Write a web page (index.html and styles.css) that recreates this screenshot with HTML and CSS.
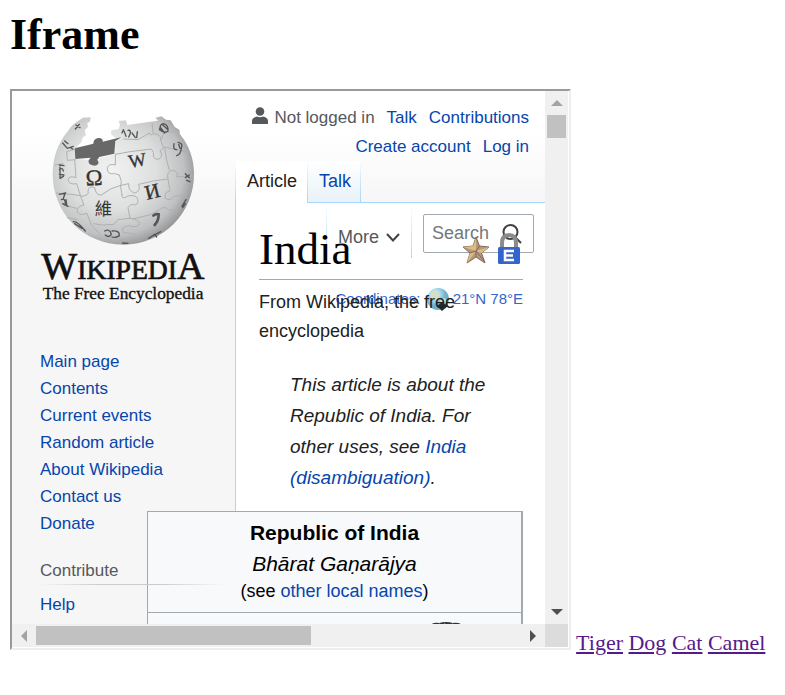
FILE: index.html
```html
<!DOCTYPE html>
<html lang="en">
<head>
<meta charset="utf-8">
<title>Iframe</title>
<link rel="stylesheet" href="styles.css">
</head>
<body>
<h1 class="heading">Iframe</h1>
<div class="frame">
  <div class="frame-grid">
    <div class="viewport">
      <aside class="sidebar">
        <svg class="logo" viewBox="0 0 510 600" role="img" aria-label="Wikipedia, The Free Encyclopedia">
          <defs>
            <radialGradient id="ball" cx="0.42" cy="0.42" r="0.62">
              <stop offset="0" stop-color="#f2f2f2"/>
              <stop offset="0.5" stop-color="#dedfdf"/>
              <stop offset="0.82" stop-color="#bfc0c1"/>
              <stop offset="1" stop-color="#8e8f91"/>
            </radialGradient>
          </defs>
          <path fill="url(#ball)" d="M128 38L152 37L150 50L142 54L144 66L134 76L138 90L128 98L124 112L108 128L106 162L150 165Q158 180 172 176L178 160L226 148V110L243 100L226 98L213 88L214 76L236 72L240 60L236 48L258 46L262 60L330 50L354 47L346 38L364 34L378 44L392 46L404 66L418 74L420 88Q462 140 462 208C462 326 368 419 250 419S38 326 38 208Q38 132 84 78Q98 56 118 46Z"/>
          <path fill="#686868" d="M104 130L160 116Q160 102 174 99Q190 98 188 110L243 97Q236 104 226 108L223 146L178 156L172 164Q182 178 164 182Q142 180 146 166L152 158L106 162Z"/>
          <g fill="none" stroke="#b0b0b0" stroke-width="3">
            <path d="M226 146V180Q208 174 202 188Q200 210 224 206L238 210Q248 230 242 246L246 270"/>
            <path d="M104 162L108 218Q86 210 84 226Q88 240 110 236L122 274Q150 272 144 258Q146 240 164 248Q168 272 184 270L212 252Q240 240 266 236Q264 258 284 264Q304 258 296 238L340 228L384 222Q378 198 400 196Q418 202 410 216L460 212"/>
            <path d="M226 148L270 140L334 132Q344 142 340 154Q346 168 360 160Q370 150 360 138L374 126L428 138L448 146"/>
            <path d="M336 54L340 86Q366 88 362 106L370 126"/>
            <path d="M340 86Q330 94 328 84L294 104L250 102"/>
            <path d="M388 196L380 166L374 128"/>
            <path d="M122 274L132 300Q108 304 112 322Q124 334 140 324L154 360L184 392"/>
            <path d="M246 268Q244 280 254 278Q274 266 290 276Q300 294 286 300Q272 294 264 308L270 340Q294 342 300 356Q290 370 266 362Q240 366 250 382L282 386L300 408"/>
            <path d="M270 340L234 344L222 358L188 360L160 356"/>
            <path d="M384 222L390 258Q370 262 376 280Q392 290 402 274L440 270"/>
            <path d="M276 342L328 330L356 316Q372 300 386 314L412 318"/>
            <path d="M44 180L70 176M48 264L92 268L122 272M70 300L110 310M80 338L112 344"/>
            <path d="M402 80L372 82L364 104M106 164L82 166L80 140L106 132"/>
          </g>
          <g fill="#333" stroke="#333" font-family="Liberation Serif, serif" text-anchor="middle">
            <text x="163" y="241" font-size="68" transform="rotate(-3 163 240)">Ω</text>
            <text x="295" y="184" font-size="56" transform="rotate(-10 297 183)">W</text>
            <text x="342" y="279" font-size="62" transform="rotate(-14 344 278)">И</text>
            <text x="190" y="331" font-size="52" stroke="none" font-family="Noto Sans CJK TC, sans-serif">維</text>
          </g>
          <g fill="none" stroke="#555" stroke-width="4" stroke-linecap="round">
            <path stroke-width="8" d="M340 332Q346 326 356 328Q356 348 344 360"/>
            <path d="M252 78L258 94M264 76Q274 74 270 88L266 96M276 84L286 98M292 80L290 98M250 74L246 84"/>
            <path d="M360 66L374 84M366 58L384 74M358 72Q372 88 384 78Q386 60 370 56Q358 58 360 76"/>
            <path d="M402 116Q398 134 410 134M414 112Q430 114 424 130Q422 148 410 152M416 118L420 130"/>
            <path d="M68 114L82 130L100 124M74 108L84 116M92 128L98 132M108 60L120 68M106 72L118 58"/>
            <path d="M58 180L72 182M58 194Q68 186 70 198M58 208L72 210M60 220L70 214M60 186V218"/>
            <path d="M58 268L76 264L70 280M64 284Q76 278 76 296M68 296L84 304M78 284L80 300"/>
            <path d="M100 350Q112 348 136 378M104 356L126 370"/>
            <path d="M194 378Q210 370 214 388Q206 400 196 390M216 378Q240 376 238 392Q226 400 216 396"/>
            <path d="M326 400L344 388L350 396M340 392L362 380M438 284L426 304M436 296L428 308M436 206L448 218M436 218L448 210M440 226L450 230M248 414L264 415"/>
          </g>
          <g fill="#111" stroke="#111" font-family="Liberation Serif, serif">
            <text x="4" y="523" font-size="114" stroke-width="2">W<tspan font-size="83">IKIPEDI</tspan>A</text>
            <text x="8" y="583" font-size="52">The Free Encyclopedia</text>
          </g>
        </svg>
        <nav class="side-links" aria-label="Navigation">
          <a href="#">Main page</a>
          <a href="#">Contents</a>
          <a href="#">Current events</a>
          <a href="#">Random article</a>
          <a href="#">About Wikipedia</a>
          <a href="#">Contact us</a>
          <a href="#">Donate</a>
        </nav>
        <h3 class="side-title">Contribute</h3>
        <nav class="side-links" aria-label="Contribute">
          <a href="#">Help</a>
        </nav>
      </aside>
      <main class="main">
        <header class="header">
          <div class="personal">
            <svg class="person" viewBox="0 0 16 18" aria-hidden="true"><circle cx="8" cy="4.5" r="4.3"/><path d="M0 17V14C0 11 3 10 5 9.5Q8 11 11 9.5C13 10 16 11 16 14V17Z"/></svg>
            <span>Not logged in</span>
            <a href="#">Talk</a>
            <a href="#">Contributions</a>
          </div>
          <div class="personal">
            <a href="#">Create account</a>
            <a href="#">Log in</a>
          </div>
          <nav class="tabs" aria-label="Namespaces">
            <a class="tab current" href="#">Article</a>
            <a class="tab" href="#">Talk</a>
          </nav>
        </header>
        <div class="tools">
          <button class="more" type="button">More
            <svg viewBox="0 0 14 9" aria-hidden="true"><path d="M1 1L7 7.5L13 1"/></svg>
          </button>
          <div class="search">
            <input type="text" placeholder="Search" aria-label="Search">
            <svg viewBox="0 0 20 20" aria-hidden="true"><circle cx="8.5" cy="8" r="7"/><path d="M13 13L19 19"/></svg>
          </div>
        </div>
        <div class="badges">
          <svg class="star" viewBox="0 0 28 28" role="img" aria-label="Featured article"><path fill="#b79a72" stroke="#806a61" d="M14 1L17.500 10L27 11L19.500 17L23 27L14 21L5 27L8 17L1 11L11 10Z"/><path fill="#d9bd82" d="M14 2V15L11 10ZM27 11L14 15L19.500 17ZM5 27L14 15L8 17ZM1 11L14 15L11 10Z"/><path fill="none" stroke="#80666b" d="M14 15L17.500 10M14 15L23 26M14 15V21M14 15L8 17"/></svg>
          <svg class="lock" viewBox="0 0 22 32" role="img" aria-label="Extended-protected"><path fill="none" stroke="#8b8b8b" stroke-width="4" d="M4 17V11Q4 3 11 3T18 11V17"/><rect y="15" width="22" height="17" rx="1.500" fill="#36c"/><path fill="none" stroke="#fff" stroke-width="2.500" d="M16 19H7V28H16M7 23.500H15"/></svg>
        </div>
        <article class="article">
          <h2 class="title">India</h2>
          <p class="coords"><a href="#">Coordinates</a>:
            <svg viewBox="0 0 24 24" aria-hidden="true"><defs><radialGradient id="earth" cx=".35" cy=".3"><stop offset="0" stop-color="#e8f7fb"/><stop offset=".6" stop-color="#9fd3e6"/><stop offset="1" stop-color="#6fb0ca"/></radialGradient></defs><circle cx="11" cy="11" r="11" fill="url(#earth)"/><path fill="#d7dfc2" d="M5 4L11 3L13 8L8 12L4 9ZM13 12L18 10L20 14L14 18Z"/><path fill="#252c30" d="M10 18L15 14L21 18L15 23Z"/></svg><a href="#">21°N 78°E</a></p>
          <p class="tagline">From Wikipedia, the free encyclopedia</p>
          <p class="hatnote">This article is about the Republic of India. For other uses, see <a href="#">India (disambiguation)</a>.</p>
          <table class="infobox">
            <tbody>
              <tr><th><span class="name">Republic of India</span><i class="native">Bhārat Gaṇarājya</i><span class="others">(see <a href="#">other local names</a>)</span></th></tr>
              <tr><td><svg class="emblem" viewBox="0 0 36 30" aria-hidden="true"><path fill="#333" d="M0 5Q4 0 11 1Q18-1 25 1Q33 0 36 5V30H0Z"/><path stroke="#eee" fill="none" d="M7 4L12 2M16 2L20 3M24 2L29 4"/></svg></td></tr>
            </tbody>
          </table>
        </article>
      </main>
    </div>
    <div class="bar vertical">
      <button type="button" aria-label="Scroll up"><svg viewBox="0 0 12 6"><path fill="#a3a3a3" d="M0 6L6 0L12 6Z"/></svg></button>
      <div class="thumb"></div>
      <button class="end" type="button" aria-label="Scroll down"><svg viewBox="0 0 12 6"><path fill="#505050" d="M0 0H12L6 6Z"/></svg></button>
    </div>
    <div class="bar horizontal">
      <button type="button" aria-label="Scroll left"><svg viewBox="0 0 6 12"><path fill="#a3a3a3" d="M6 0V12L0 6Z"/></svg></button>
      <div class="thumb"></div>
      <button class="end" type="button" aria-label="Scroll right"><svg viewBox="0 0 6 12"><path fill="#505050" d="M0 0L6 6L0 12Z"/></svg></button>
    </div>
    <div class="corner"></div>
  </div>
</div>
<a class="visited" href="#">Tiger</a>
<a class="visited" href="#">Dog</a>
<a class="visited" href="#">Cat</a>
<a class="visited" href="#">Camel</a>
</body>
</html>
```
FILE: styles.css
```css
* { box-sizing: border-box; }
body { margin: 10px; font: 22px "Liberation Serif", serif; color: #000; background: #fff; }
a { color: #0645ad; text-decoration: none; }
.visited { color: #551a8b; text-decoration: underline; }
.heading { margin: 0 0 30px; font-size: 44px; line-height: 49px; }

/* Embedded page */
.frame { display: inline-block; overflow: hidden; width: 561px; max-width: 100%; height: 561px; padding: 0 1px 1px 0; border: 2px solid #9a9a9a; border-right-color: #eee; border-bottom-color: #eee; }
.frame-grid { display: grid; grid-template: minmax(0, 1fr) 23px / minmax(0, 1fr) 23px; height: 100%; }
.viewport { position: relative; display: flex; overflow: hidden; font-family: "Liberation Sans", sans-serif; font-size: 19px; line-height: 31px; color: #202122; background: linear-gradient(#fff 44px, #f6f6f6 112px); }

/* Scrollbars */
.bar { display: flex; background: #f0f0f0; }
.bar button { display: grid; place-items: center; flex: none; width: 24px; height: 23px; padding: 0; border: 0; background: none; }
.bar .end { margin-left: auto; }
.bar svg { width: 6px; height: 12px; }
.vertical { flex-direction: column; }
.vertical button { width: 23px; height: 24px; }
.vertical .end { margin: auto 0 0; }
.vertical svg { width: 12px; height: 6px; }
.thumb { background: #c1c1c1; }
.vertical .thumb { height: 23px; margin: 0 2px; }
.horizontal .thumb { width: 275px; margin: 2px 0; }
.corner { background: #dcdcdc; }

/* Sidebar */
.sidebar { position: relative; z-index: 2; flex: none; width: 223px; padding: 14px 12px 0 28px; font-size: 17px; line-height: 27px; }
.logo { display: block; width: 170px; height: 200px; margin-bottom: 43px; }
.side-links { display: flex; flex-direction: column; align-items: flex-start; }
.side-title { margin: 20px 0 6px; border-bottom: 1px solid; border-image: linear-gradient(to right, transparent, #c8ccd1 33%, #c8ccd1 66%, transparent) 1; font-size: 17px; font-weight: normal; color: #54595d; }

/* Header */
.main { position: relative; flex: 1; min-width: 0; }
.header { display: flex; flex-direction: column; height: 112px; padding-top: 12px; }
.personal { display: flex; justify-content: flex-end; gap: 12px; padding-right: 16px; font-size: 17px; line-height: 29px; color: #54595d; }
.person { width: 16px; height: 18px; margin: 4px -6px 0 0; fill: #54595d; }
.tabs { display: flex; flex: 1; align-items: stretch; }
.tabs::after { content: ""; flex: 1; border-bottom: 1px solid #a7d7f9; }
.tab { padding: 5px 9px 0 11px; font-size: 18px; line-height: 31px; border: solid; border-width: 0 1px 1px; border-color: #a7d7f9; border-image: linear-gradient(transparent, #a7d7f9) 1; background: linear-gradient(#fff, #e8f2f8); }
.current { border-width: 0 0 0 1px; color: #202122; background: #fff; padding-right: 10px; }

/* Tools over the article */
.tools { position: absolute; z-index: 1; top: 114px; right: 11px; display: flex; align-items: flex-start; gap: 11px; font-size: 18px; }
.more { display: flex; align-items: center; gap: 7px; height: 53px; padding: 12px 11px 0; border: solid; border-width: 0 1px; border-image: linear-gradient(transparent, #a7d7f9) 1; background: none; font: inherit; color: #54595d; }
.more svg { width: 14px; height: 9px; fill: none; stroke: #404244; stroke-width: 2; }
.search { display: flex; align-items: center; width: 111px; height: 39px; margin-top: 9px; padding: 0 11px 0 8px; border: 1px solid #a2a9b1; border-radius: 2px; background: #fff; }
.search input { flex: 1; min-width: 0; padding: 0; border: 0; background: none; font: inherit; }
.search input::placeholder { color: #72777d; }
.search svg { flex: none; width: 20px; height: 20px; fill: none; stroke: #404244; stroke-width: 2; }
.badges { position: absolute; z-index: 1; top: 141px; right: 25px; display: flex; align-items: flex-end; gap: 8px; }
.star { width: 28px; height: 28px; }
.lock { width: 22px; height: 32px; }

/* Article */
.article { position: relative; min-height: 600px; padding: 22px 22px 0 23px; border-left: 1px solid #a7d7f9; background: #fff; }
.title { position: relative; z-index: 2; margin: 0; padding-bottom: 6px; border-bottom: 1px solid #a2a9b1; font: 45px/48px "Liberation Serif", serif; color: #000; }
.coords { position: absolute; top: 80px; right: 22px; margin: 0; font-size: 15px; white-space: nowrap; color: #36c; }
.coords a { color: #36c; }
.coords svg { width: 24px; height: 24px; margin: 0 2px; vertical-align: middle; }
.tagline { position: relative; margin: 8px 0 23px; font-size: 18px; line-height: 29px; }
.hatnote { margin: 0 0 18px; padding: 0 22px 0 31px; font-style: italic; }
.infobox { width: 376px; margin-left: -112px; position: relative; border: 1px solid #a2a9b1; border-right-width: 2px; border-spacing: 0; background: #f8f9fa; color: #000; }
.infobox th { padding: 5px 0 8px; border-bottom: 1px solid #a2a9b1; font-weight: normal; text-align: center; }
.name, .native, .others { display: block; font-size: 21px; }
.name { font-weight: bold; }
.others { font-size: 18px; line-height: 25px; }
.infobox td { padding: 9px 57px 0 0; text-align: right; }
.emblem { display: inline-block; width: 36px; height: 30px; vertical-align: top; }
```
